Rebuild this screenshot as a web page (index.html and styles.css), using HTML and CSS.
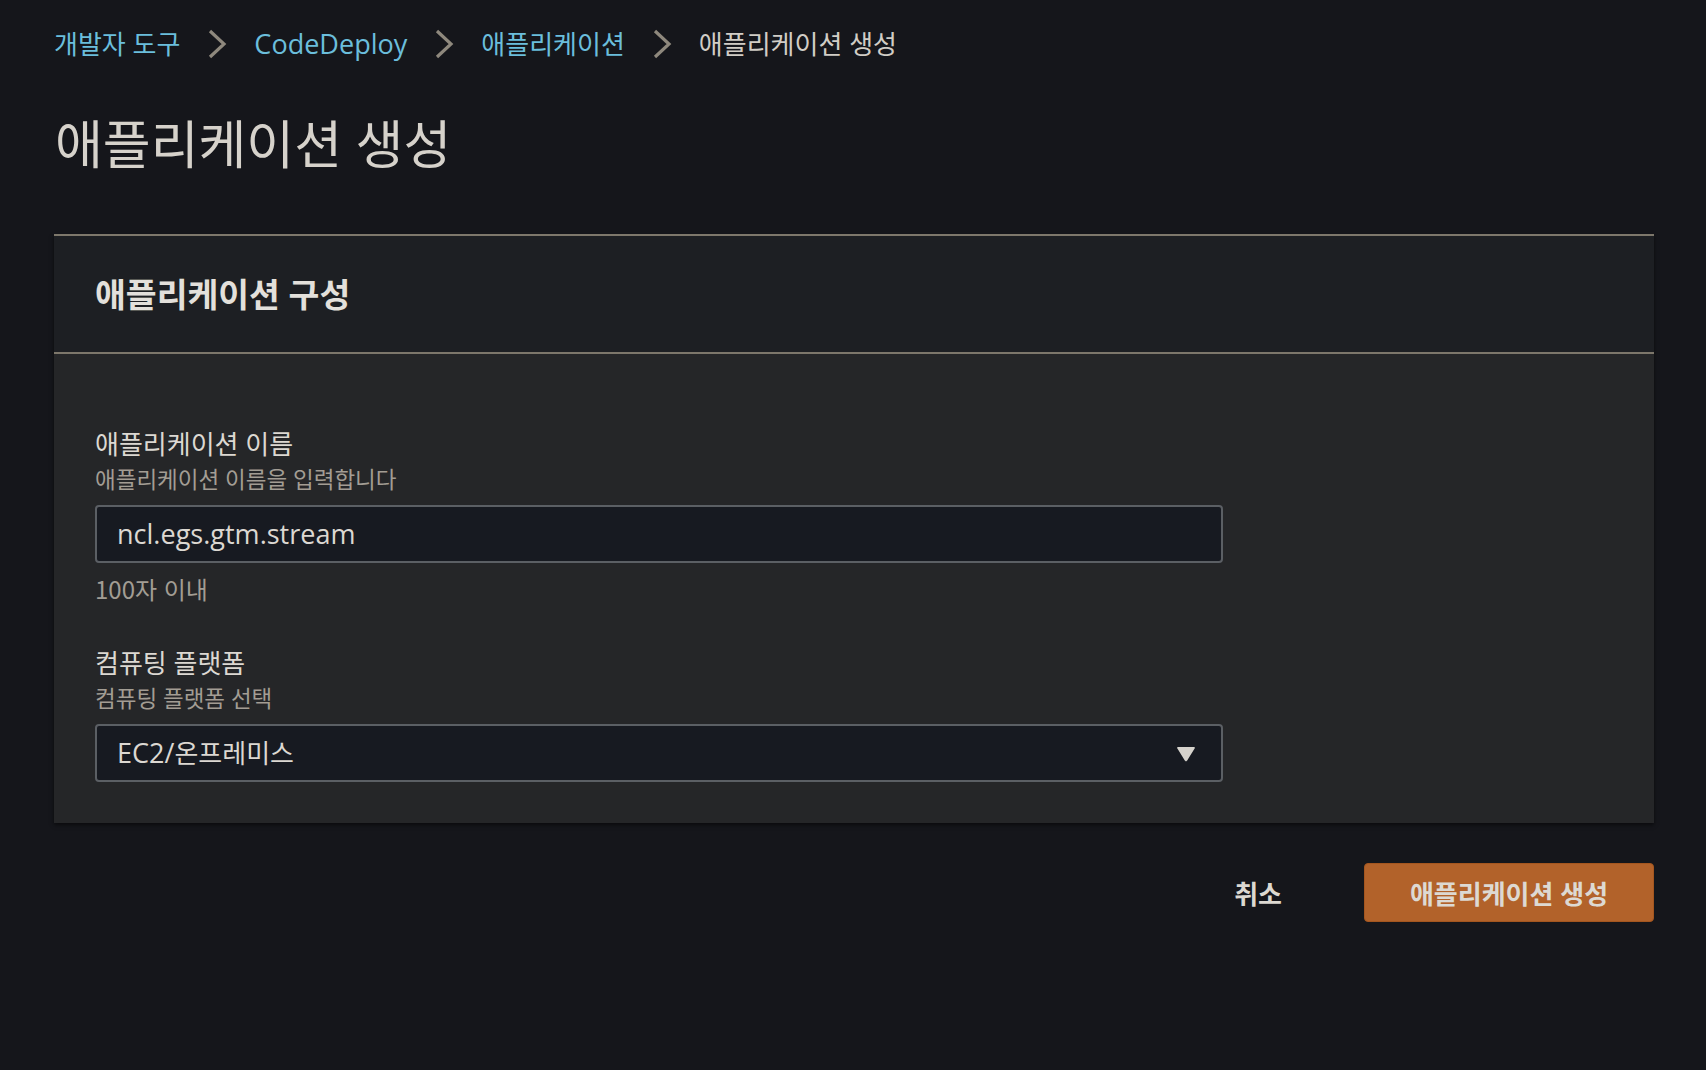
FILE: index.html
```html
<!DOCTYPE html>
<html lang="ko">
<head>
<meta charset="utf-8">
<title>애플리케이션 생성</title>
<link rel="stylesheet" href="styles.css">
</head>
<body>
<div class="page">
  <nav class="breadcrumb">
    <a class="crumb-link" href="#">개발자 도구</a>
    <svg class="chev" viewBox="0 0 20 30" width="20" height="30"><polyline points="3,2 17,15 3,28" fill="none" stroke="#8e887d" stroke-width="3.2"/></svg>
    <a class="crumb-link" href="#"><span class="lt">CodeDeploy</span></a>
    <svg class="chev" viewBox="0 0 20 30" width="20" height="30"><polyline points="3,2 17,15 3,28" fill="none" stroke="#8e887d" stroke-width="3.2"/></svg>
    <a class="crumb-link" href="#">애플리케이션</a>
    <svg class="chev" viewBox="0 0 20 30" width="20" height="30"><polyline points="3,2 17,15 3,28" fill="none" stroke="#8e887d" stroke-width="3.2"/></svg>
    <span class="crumb-current">애플리케이션 생성</span>
  </nav>

  <h1 class="page-title">애플리케이션 생성</h1>

  <section class="panel">
    <header class="panel-header">
      <h2 class="panel-title">애플리케이션 구성</h2>
    </header>
    <div class="panel-body">
      <div class="field">
        <div class="field-label">애플리케이션 이름</div>
        <div class="field-desc">애플리케이션 이름을 입력합니다</div>
        <div class="input"><span class="lt">ncl.egs.gtm.stream</span></div>
        <div class="field-hint">100자 이내</div>
      </div>
      <div class="field field-second">
        <div class="field-label">컴퓨팅 플랫폼</div>
        <div class="field-desc">컴퓨팅 플랫폼 선택</div>
        <div class="input select">
          <span><span class="lt">EC2/</span>온프레미스</span>
          <svg class="caret" viewBox="0 0 20 16" width="20" height="16"><path d="M2.2 1 H17.8 Q19.6 1 18.6 2.6 L11.2 14.6 Q10 16.2 8.8 14.6 L1.4 2.6 Q0.4 1 2.2 1 Z" fill="#d6d3cd"/></svg>
        </div>
      </div>
    </div>
  </section>

  <div class="actions">
    <button class="btn-cancel" type="button">취소</button>
    <button class="btn-primary" type="button">애플리케이션 생성</button>
  </div>
</div>
</body>
</html>
```

FILE: styles.css
```css
html, body {
  margin: 0;
  padding: 0;
  background: #15161b;
}

body {
  font-family: "Open Sans", "Noto Sans CJK KR", sans-serif;
  color: #d6d2cb;
}

.lt {
  font-size: 1.04em;
}

.page {
  padding: 26px 52px 0 54px;
}

.breadcrumb {
  display: flex;
  align-items: center;
  height: 36px;
  font-size: 26px;
  line-height: 36px;
}

.crumb-link {
  color: #6bbedc;
  text-decoration: none;
}

.crumb-current {
  color: #d1cdc6;
}

.chev {
  display: block;
  margin: 0 27px;
}

.page-title {
  margin: 52px 0 0 1px;
  font-size: 52px;
  line-height: 60px;
  font-weight: 400;
  color: #d6d2cb;
}

.panel {
  margin-top: 60px;
  background: #252628;
  border-top: 2px solid #7d776b;
  box-shadow: 0 2px 4px rgba(0, 0, 0, 0.55);
}

.panel-header {
  background: #1d1f23;
  border-bottom: 2px solid #7d776b;
  padding: 38px 41px;
}

.panel-title {
  margin: 0;
  font-size: 33.5px;
  line-height: 40px;
  font-weight: 700;
  color: #e3e0db;
}

.panel-body {
  padding: 72px 41px 41px;
}

.field {
  width: 1128px;
}

.field-second {
  margin-top: 40px;
}

.field-label {
  font-size: 26px;
  line-height: 36px;
  color: #dcd8d2;
}

.field-desc {
  margin-top: 2px;
  font-size: 22.5px;
  line-height: 32px;
  color: #a29d94;
}

.input {
  box-sizing: border-box;
  margin-top: 9px;
  height: 58px;
  border: 2px solid #5b5f64;
  border-radius: 4px;
  background: #171a21;
  padding: 0 20px;
  display: flex;
  align-items: center;
  font-size: 26px;
  line-height: 36px;
  color: #dcd8d2;
}

.select {
  justify-content: space-between;
  padding-right: 25px;
}

.caret {
  display: block;
  margin-top: 1px;
}

.field-hint {
  margin-top: 10px;
  font-family: "Noto Sans CJK KR", sans-serif;
  font-size: 24px;
  line-height: 32px;
  color: #a29d94;
}

.actions {
  display: flex;
  justify-content: flex-end;
  align-items: center;
  gap: 40px;
  margin-top: 40px;
}

.btn-cancel,
.btn-primary {
  font-family: "Open Sans", "Noto Sans CJK KR", sans-serif;
  font-weight: 700;
  font-size: 26px;
  height: 59px;
  cursor: pointer;
}

.btn-cancel {
  background: transparent;
  border: none;
  padding: 0 42px;
  color: #dcd8d1;
}

.btn-primary {
  box-sizing: border-box;
  width: 290px;
  background: #b2622a;
  border: 1px solid #a4561f;
  border-radius: 4px;
  color: #ddd9d2;
  padding: 0;
}
```
